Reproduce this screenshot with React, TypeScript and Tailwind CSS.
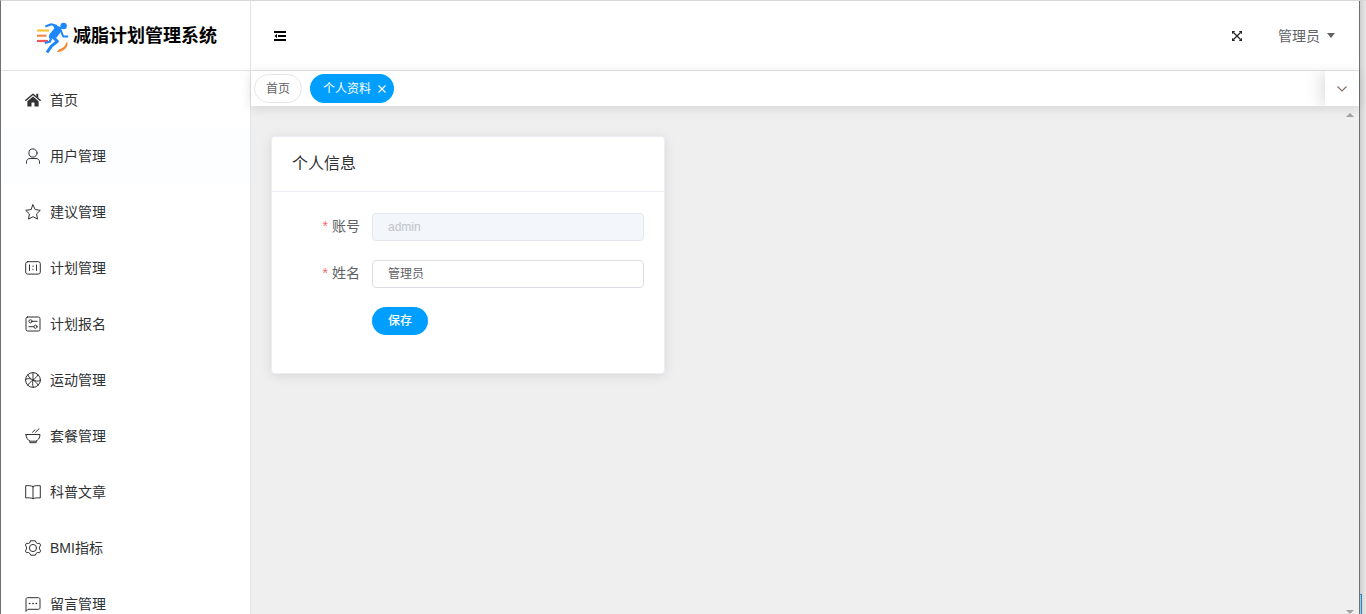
import type { ReactNode } from 'react';

function Glyph({ children }: { children: ReactNode }) {
  return (
    <svg
      viewBox="0 0 16 16"
      className="size-4 shrink-0"
      fill="none"
      stroke="currentColor"
      strokeWidth="1"
      strokeLinecap="round"
      strokeLinejoin="round"
      aria-hidden="true"
    >
      {children}
    </svg>
  );
}

const menu: { label: string; icon: ReactNode }[] = [
  {
    label: '首页',
    icon: (
      <>
        <path d="M.9 8.3 8 2.2l7.1 6.1" strokeWidth="1.5" />
        <path d="M11.3 1.8h2v4.1l-2-1.7z" fill="currentColor" stroke="none" />
        <path d="M8 4.4l5.6 4.8v5.3H9.5v-4h-3v4H2.4V9.2z" fill="currentColor" stroke="none" />
      </>
    ),
  },
  {
    label: '用户管理',
    icon: (
      <>
        <circle cx="8" cy="5" r="4.1" />
        <path d="M1.5 15.3v-1.5c0-2 1.5-3.3 3.5-3.3h6c2 0 3.5 1.3 3.5 3.3v1.5" />
      </>
    ),
  },
  {
    label: '建议管理',
    icon: <path d="M8 .9l2.2 4.7 5.1.7-3.7 3.6.9 5.200L8 12.700l-4.500 2.400.900-5.200L.7 6.300l5.100-.700z" />,
  },
  {
    label: '计划管理',
    icon: (
      <>
        <rect x=".7" y="1.7" width="14.6" height="12.4" rx="2" />
        <path d="M4.500 5v5.500M11.500 5v5.500M8 5.800v.600M8 9.200v.600" />
      </>
    ),
  },
  {
    label: '计划报名',
    icon: (
      <>
        <rect x="1" y="1" width="14" height="14" rx="1.5" />
        <circle cx="5.500" cy="5.300" r="1.600" />
        <circle cx="10.500" cy="10.700" r="1.600" />
        <path d="M7.300 5.300H12M4 10.700h4.700" />
      </>
    ),
  },
  {
    label: '运动管理',
    icon: (
      <>
        <circle cx="8" cy="8" r="7.400" />
        <path d="M8 .6C7.800 4 8.300 6.500 8 8M8 8C5.500 9.800 3.800 11.500 2.800 13.200M8 8c2.500 1.500 4.200 3.300 5.200 5.200M.7 7.200C3 6.200 5.600 6.400 8 8M13 2.700C11.800 5 10 6.800 8 8M15.300 8.800c-2.500.600-5.300.300-7.300-.800M8 8c-.600 2.500-.600 5 .300 7.300M2.700 2.800c1 2 1.900 2.900 3.100 3.800" />
      </>
    ),
  },
  {
    label: '套餐管理',
    icon: (
      <>
        <path d="M1 6.500h14c0 3.700-2 6-4.500 6.700h-5C3 12.500 1 10.200 1 6.500z" />
        <path d="M4.800 13.300v1.400h6.400v-1.400M7.500 4.200l2.500-2.400M10.500 4.200 14 .900" />
      </>
    ),
  },
  {
    label: '科普文章',
    icon: (
      <path d="M8 2.500C6 1.600 3.500 1.500.7 1.700v12.200c2.800-.200 5.300-.100 7.300.800 2-.900 4.500-1 7.300-.800V1.700C12.500 1.500 10 1.600 8 2.500zM8 2.500v12.200" />
    ),
  },
  {
    label: 'BMI指标',
    icon: (
      <>
        <path d="M5.700.8h4.600l.9 1.900 1.300.800 2.100-.200 1 1.800-1.100 2v1.800l1.100 2-1 1.800-2.100-.200-1.300.800-.900 1.900H5.700l-.900-1.900-1.300-.800-2.100.200-1-1.800 1.100-2V7.100L.4 5.100l1-1.800 2.100.200 1.300-.800z" />
        <circle cx="8" cy="8" r="3.600" />
      </>
    ),
  },
  {
    label: '留言管理',
    icon: (
      <>
        <path d="M1 15V3.200C1 2.300 1.700 1.700 2.500 1.700h11c.9 0 1.500.600 1.500 1.500v8.600c0 .900-.6 1.500-1.500 1.500H3.300z" />
        <path d="M4.500 7.500h.4M7.800 7.500h.4M11.100 7.500h.4" strokeWidth="1.400" />
      </>
    ),
  },
];

function Logo() {
  return (
    <svg viewBox="0 0 34 36" className="h-9 w-[34px] shrink-0" fill="none" aria-hidden="true">
      <path d="M2 12.500h12" stroke="#f8c33c" strokeWidth="2.200" />
      <path d="M2 17.700h9.500" stroke="#f2884a" strokeWidth="2.200" />
      <path d="M2 23h11" stroke="#f0555c" strokeWidth="2.200" />
      <circle cx="28.600" cy="8" r="3.200" fill="#1c86fa" />
      <path d="M10.300 8.500 16.300 6.200 22 8" stroke="#1c86fa" strokeWidth="2" strokeLinejoin="round" />
      <path d="M17.500 6.500 26.500 9.200 26 13.500l-4.300 6-6.700 1.500c-1.800-1.800-1.300-4 .300-5.800l4-4.700z" fill="#1c86fa" />
      <path d="M25.500 11.500l2.700 7 5-.100" stroke="#1c86fa" strokeWidth="2" strokeLinejoin="round" />
      <path d="M17.800 19l4.600 4.300-6 4.900-4.400 6.300" stroke="#1c86fa" strokeWidth="3" strokeLinejoin="round" />
      <path d="M16.200 20.500 14.700 23.800 9.800 25" stroke="#1c86fa" strokeWidth="2.200" strokeLinejoin="round" />
      <path d="M32 24.500c.4 5-3 8.500-9.500 9l1.800-1.800c4-.900 6.200-3.200 7.700-7.200z" fill="#f7862f" stroke="#f7862f" strokeWidth="1" strokeLinejoin="round" />
    </svg>
  );
}

function Sidebar() {
  return (
    <aside className="flex w-[250px] shrink-0 flex-col border-r border-[#e4e4e4] bg-white">
      <div className="flex h-[70px] shrink-0 items-center gap-1 border-b border-[#e4e4e4] pl-[34px]">
        <Logo />
        <h1 className="text-lg font-bold text-black">减脂计划管理系统</h1>
      </div>
      <nav className="flex-1 overflow-hidden pt-px">
        <ul>
          {menu.map((item) => (
            <li key={item.label}>
              <a
                href="#"
                className={
                  item.label === '用户管理'
                    ? 'flex h-14 items-center gap-[9px] bg-[#fcfeff] pl-6'
                    : 'flex h-14 items-center gap-[9px] pl-6'
                }
              >
                <Glyph>{item.icon}</Glyph>
                <span>{item.label}</span>
              </a>
            </li>
          ))}
        </ul>
      </nav>
    </aside>
  );
}

function Header() {
  return (
    <header className="flex h-[70px] shrink-0 items-center justify-between border-b border-[#e4e4e4] bg-white pr-6 pl-[23px]">
      <button type="button" aria-label="折叠菜单" className="text-black">
        <svg viewBox="0 0 12 10" className="h-[10px] w-3" aria-hidden="true">
          <path d="M0 0h12v2H0zM4 4h8v2H4zM0 8h12v2H0zM3 2.800v4.400L.5 5z" fill="currentColor" />
        </svg>
      </button>
      <div className="flex items-center gap-9">
        <button type="button" aria-label="全屏" className="text-[#222]">
          <svg viewBox="0 0 10 10" className="size-[10px]" aria-hidden="true">
            <path d="M1.500 1.500l7 7M8.500 1.500l-7 7" stroke="currentColor" strokeWidth="1.200" />
            <path d="M0 0h3.200L0 3.200zM10 0v3.200L6.800 0zM0 10V6.800L3.200 10zM10 10H6.800L10 6.800z" fill="currentColor" />
          </svg>
        </button>
        <button type="button" className="flex items-center gap-[7px] text-[#606266]">
          管理员
          <svg viewBox="0 0 8 5" className="h-[5px] w-2" aria-hidden="true">
            <path d="M0 0h8L4 5z" fill="currentColor" />
          </svg>
        </button>
      </div>
    </header>
  );
}

function Tabs() {
  return (
    <div className="z-10 flex h-[35px] shrink-0 items-stretch justify-between bg-white shadow-[0_2px_12px_rgba(0,0,0,0.12)]">
      <div className="flex items-center gap-2 pl-[3px] text-xs">
        <a href="#" className="flex h-[29px] items-center rounded-full border border-[#e6e6e6] px-[11px] text-[#606266]">
          首页
        </a>
        <div className="flex h-[29px] items-center gap-[7px] rounded-full bg-[#009fff] pr-2 pl-[13px] text-white">
          <span>个人资料</span>
          <button type="button" aria-label="关闭">
            <svg viewBox="0 0 8 8" className="size-2" aria-hidden="true">
              <path d="M.5.5l7 7M7.500.5l-7 7" stroke="currentColor" strokeWidth="1.200" />
            </svg>
          </button>
        </div>
      </div>
      <div className="overflow-hidden pl-6">
        <button
          type="button"
          aria-label="更多标签"
          className="flex h-full w-[34px] items-center justify-center bg-white text-[#8a6d5a] shadow-[0_0_20px_rgba(0,0,0,0.2)]"
        >
          <svg viewBox="0 0 10 6" className="h-[6px] w-[10px]" fill="none" aria-hidden="true">
            <path d="M.5.5 5 5 9.500.5" stroke="currentColor" strokeWidth="1.200" />
          </svg>
        </button>
      </div>
    </div>
  );
}

function Required({ htmlFor, children }: { htmlFor: string; children: ReactNode }) {
  return (
    <label htmlFor={htmlFor} className="flex w-20 shrink-0 justify-end gap-1 pr-3 pb-0.5 text-[#606266]">
      <span className="text-[#f56c6c]">*</span>
      {children}
    </label>
  );
}

function ProfileCard() {
  return (
    <section className="w-full max-w-[394px] rounded border border-[#ebeef5] bg-white shadow-[0_2px_12px_rgba(0,0,0,0.1)]">
      <h2 className="border-b border-[#ebeef5] px-5 py-[15px] text-base text-[#303133]">个人信息</h2>
      <form className="flex flex-col gap-[19px] px-5 pt-[21px] pb-[38px]">
        <div className="flex items-center">
          <Required htmlFor="account">账号</Required>
          <input
            id="account"
            disabled
            defaultValue="admin"
            className="h-7 min-w-0 flex-1 rounded border border-[#e4e7ed] bg-[#f3f6fa] px-[15px] text-xs text-[#c0c4cc]"
          />
        </div>
        <div className="flex items-center">
          <Required htmlFor="name">姓名</Required>
          <input
            id="name"
            defaultValue="管理员"
            className="h-7 min-w-0 flex-1 rounded border border-[#dcdfe6] bg-white px-[15px] pb-1 text-xs text-[#606266]"
          />
        </div>
        <div className="pl-20">
          <button type="button" className="block h-7 rounded-full bg-[#009fff] px-4 text-xs font-medium text-white">
            保存
          </button>
        </div>
      </form>
    </section>
  );
}

export default function App() {
  return (
    <div className="flex h-screen overflow-hidden border-t border-l border-t-[#d6d6d6] border-l-[#707070] bg-white font-['Liberation_Sans','Noto_Sans_CJK_SC',sans-serif] text-sm text-[#303133]">
      <Sidebar />
      <div className="flex min-w-0 flex-1 flex-col">
        <Header />
        <Tabs />
        <div className="flex min-h-0 flex-1 bg-[#efefef]">
          <main className="min-w-0 flex-1 px-5 pt-[30px]">
            <ProfileCard />
          </main>
          <div className="flex w-[18px] shrink-0 flex-col items-center justify-between pt-[7px] text-[#a3a3a3]">
            <svg viewBox="0 0 8 4" className="h-1 w-2" aria-hidden="true">
              <path d="M0 4h8L4 0z" fill="currentColor" />
            </svg>
            <svg viewBox="0 0 8 4" className="h-1 w-2" aria-hidden="true">
              <path d="M0 0h8L4 4z" fill="currentColor" />
            </svg>
          </div>
        </div>
      </div>
      <div className="flex w-[7px] shrink-0 flex-col justify-end border-l border-[#707070] bg-linear-to-r from-[#cfcfcf] to-[#e8e8e8]">
        <div className="h-5 w-[2px] border-t border-r border-[#2a86b5] bg-[#9cc7de]" />
      </div>
    </div>
  );
}
